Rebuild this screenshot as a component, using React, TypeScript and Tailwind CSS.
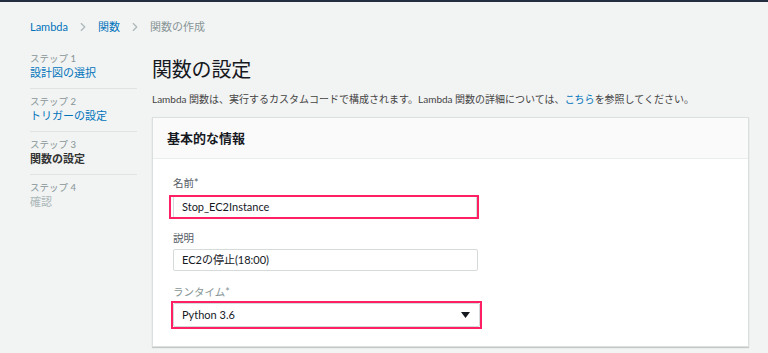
import { ChevronRight } from 'lucide-react';

const font = "font-['Lato','Noto_Sans_CJK_JP',sans-serif]";

const steps = [
  { label: 'ステップ 1', title: '設計図の選択', state: 'done' },
  { label: 'ステップ 2', title: 'トリガーの設定', state: 'done' },
  { label: 'ステップ 3', title: '関数の設定', state: 'current' },
  { label: 'ステップ 4', title: '確認', state: 'todo' },
];

function Highlight({ className }: { className: string }) {
  // pink annotation frame drawn over the field
  return <div className={`pointer-events-none absolute border-2 border-[#ff1f63] ${className}`} />;
}

export default function App() {
  return (
    <div className={`min-h-[353px] w-full bg-[#f2f3f3] text-[#16191f] ${font}`}>
      <div className="h-[2px] bg-[#232f3e]" />

      <div className="pl-[30px] pr-[19px]">
        {/* Breadcrumb */}
        <nav className="flex h-[16px] items-center gap-[8px] mt-[17px] text-[11px] leading-[16px]">
          <span className="text-[#0073bb]">Lambda</span>
          <ChevronRight className="h-[14px] w-[14px] text-[#aab7b8]" strokeWidth={2} />
          <span className="text-[#0073bb]">関数</span>
          <ChevronRight className="h-[14px] w-[14px] text-[#aab7b8]" strokeWidth={2} />
          <span className="text-[#879596]">関数の作成</span>
        </nav>

        <div className="mt-[11px] flex gap-[15px]">
          {/* Steps */}
          <aside className="w-[107px] shrink-0">
            {steps.map((s, i) => (
              <div
                key={s.label}
                className={`pb-[8px] pt-[6px] ${i < steps.length - 1 ? 'border-b border-[#dfe3e3]' : ''}`}
              >
                <div className="h-[14px] text-[9.5px] leading-[14px] text-[#879596]">{s.label}</div>
                <div
                  className={`h-[14px] text-[11px] leading-[14px] ${
                    s.state === 'done'
                      ? 'text-[#0073bb]'
                      : s.state === 'current'
                      ? 'font-bold text-[#333]'
                      : 'text-[#aab7b8]'
                  }`}
                >
                  {s.title}
                </div>
              </div>
            ))}
          </aside>

          {/* Main */}
          <main className="flex-1 pt-[8px]">
            <h1 className="mt-[1px] h-[28px] text-[20px] font-normal leading-[28px] tracking-[-0.2px] text-[#16191f]">
              関数の設定
            </h1>
            <p className="mt-[8px] h-[16px] text-[10px] leading-[16px] text-[#444]">
              Lambda 関数は、実行するカスタムコードで構成されます。Lambda 関数の詳細については、
              <span className="text-[#0073bb]">こちら</span>を参照してください。
            </p>

            <section className="mt-[10px] border border-[#dadfdf] bg-white shadow-[0_1px_1px_rgba(0,0,0,0.18)]">
              <div className="flex h-[41px] items-center border-b border-[#eaeded] bg-[#fafafa] px-[14px]">
                <h2 className="text-[13px] font-bold leading-[18px] text-[#16191f]">基本的な情報</h2>
              </div>

              <div className="pb-[19px] pl-[20px] pt-[17px]">
                <label className="block h-[14px] text-[10.5px] leading-[14px] text-[#545b64]">名前*</label>
                <div className="relative mt-[6px] w-[304px]">
                  <div className="flex h-[22px] items-center rounded-[2px] border border-[#d5dbdb] border-b-[#b7bfc0] px-[8px] text-[11px] text-[#16191f]">
                    Stop_EC2Instance
                  </div>
                  <Highlight className="-bottom-[1px] -left-[4px] -right-[2px] -top-[1px]" />
                </div>

                <label className="mt-[13px] block h-[14px] text-[10.5px] leading-[14px] text-[#545b64]">説明</label>
                <div className="mt-[4px] flex h-[22px] w-[305px] items-center rounded-[2px] border border-[#d5dbdb] px-[8px] text-[11px] text-[#16191f]">
                  EC2の停止(18:00)
                </div>

                <label className="mt-[14px] block h-[14px] text-[10.5px] leading-[14px] text-[#879596]">ランタイム*</label>
                <div className="relative mt-[4px] w-[307px]">
                  <div className="flex h-[24px] items-center justify-between rounded-[2px] border border-[#d5dbdb] pl-[8px] pr-[9px] text-[11px] text-[#16191f]">
                    <span>Python 3.6</span>
                    <svg width="9" height="6" viewBox="0 0 9 6">
                      <path d="M0 0 H9 L4.5 6 Z" fill="#16191f" />
                    </svg>
                  </div>
                  <Highlight className="-bottom-[2px] -left-[2px] -right-[2px] -top-[2px]" />
                </div>
              </div>
            </section>
          </main>
        </div>
      </div>
    </div>
  );
}
